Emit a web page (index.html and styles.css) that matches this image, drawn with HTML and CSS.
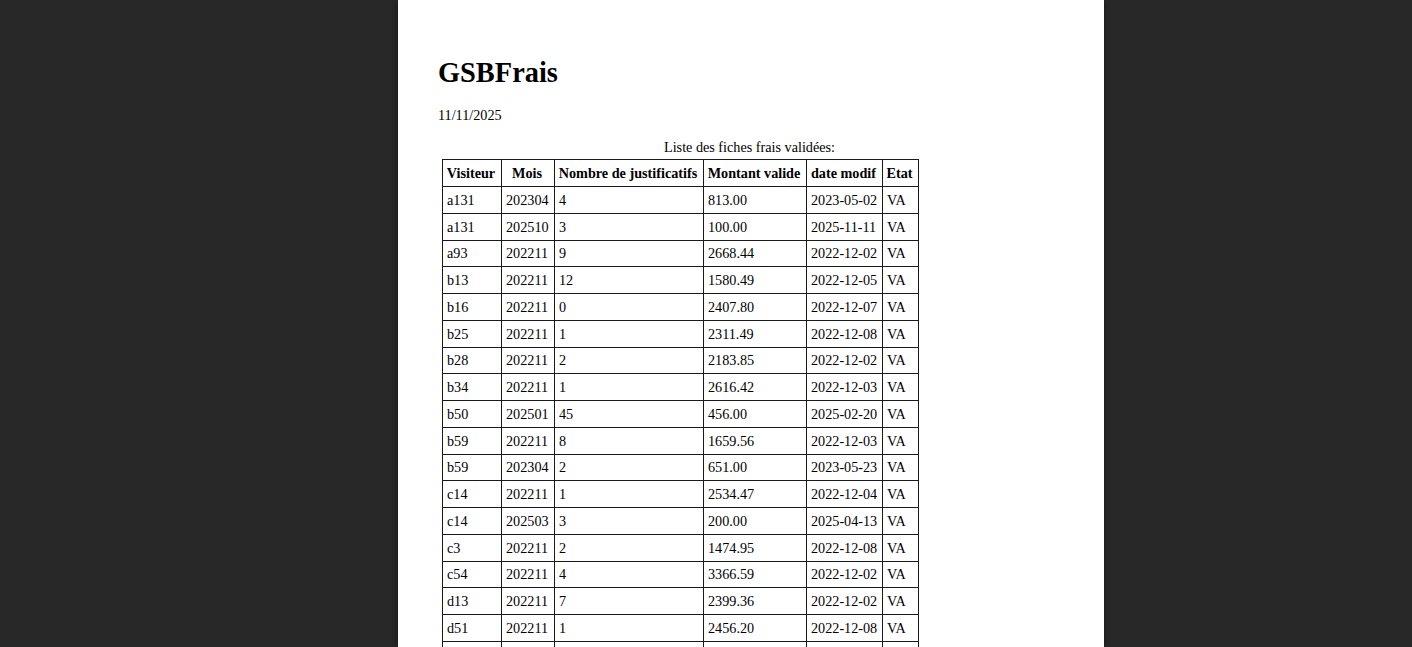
FILE: index.html
```html
<!DOCTYPE html>
<html lang="fr">
<head>
<meta charset="utf-8">
<title>GSBFrais</title>
<link rel="stylesheet" href="styles.css">
</head>
<body>
<div class="viewer">
  <div class="page">
    <h1 class="title">GSBFrais</h1>
    <p class="date">11/11/2025</p>
    <div class="caption">Liste des fiches frais validées:</div>
    <table class="list">
      <colgroup>
        <col class="c1"><col class="c2"><col class="c3"><col class="c4"><col class="c5"><col class="c6">
      </colgroup>
      <thead>
        <tr><th>Visiteur</th><th>Mois</th><th>Nombre de justificatifs</th><th>Montant valide</th><th>date modif</th><th>Etat</th></tr>
      </thead>
      <tbody>
        <tr><td>a131</td><td>202304</td><td>4</td><td>813.00</td><td>2023-05-02</td><td>VA</td></tr>
        <tr><td>a131</td><td>202510</td><td>3</td><td>100.00</td><td>2025-11-11</td><td>VA</td></tr>
        <tr><td>a93</td><td>202211</td><td>9</td><td>2668.44</td><td>2022-12-02</td><td>VA</td></tr>
        <tr><td>b13</td><td>202211</td><td>12</td><td>1580.49</td><td>2022-12-05</td><td>VA</td></tr>
        <tr><td>b16</td><td>202211</td><td>0</td><td>2407.80</td><td>2022-12-07</td><td>VA</td></tr>
        <tr><td>b25</td><td>202211</td><td>1</td><td>2311.49</td><td>2022-12-08</td><td>VA</td></tr>
        <tr><td>b28</td><td>202211</td><td>2</td><td>2183.85</td><td>2022-12-02</td><td>VA</td></tr>
        <tr><td>b34</td><td>202211</td><td>1</td><td>2616.42</td><td>2022-12-03</td><td>VA</td></tr>
        <tr><td>b50</td><td>202501</td><td>45</td><td>456.00</td><td>2025-02-20</td><td>VA</td></tr>
        <tr><td>b59</td><td>202211</td><td>8</td><td>1659.56</td><td>2022-12-03</td><td>VA</td></tr>
        <tr><td>b59</td><td>202304</td><td>2</td><td>651.00</td><td>2023-05-23</td><td>VA</td></tr>
        <tr><td>c14</td><td>202211</td><td>1</td><td>2534.47</td><td>2022-12-04</td><td>VA</td></tr>
        <tr><td>c14</td><td>202503</td><td>3</td><td>200.00</td><td>2025-04-13</td><td>VA</td></tr>
        <tr><td>c3</td><td>202211</td><td>2</td><td>1474.95</td><td>2022-12-08</td><td>VA</td></tr>
        <tr><td>c54</td><td>202211</td><td>4</td><td>3366.59</td><td>2022-12-02</td><td>VA</td></tr>
        <tr><td>d13</td><td>202211</td><td>7</td><td>2399.36</td><td>2022-12-02</td><td>VA</td></tr>
        <tr><td>d51</td><td>202211</td><td>1</td><td>2456.20</td><td>2022-12-08</td><td>VA</td></tr>
        <tr><td>e22</td><td>202211</td><td>3</td><td>1820.10</td><td>2022-12-05</td><td>VA</td></tr>
      </tbody>
    </table>
  </div>
</div>
</body>
</html>
```
FILE: styles.css
```css
html, body {
  margin: 0;
  padding: 0;
  height: 100%;
  overflow: hidden;
  background: #282828;
}

.viewer {
  display: flex;
  padding-left: 398px;
  height: 100%;
}

.page {
  width: 706px;
  flex: none;
  background: #ffffff;
  box-shadow: 0 0 6px rgba(0, 0, 0, 0.45);
  padding: 40px 40px 0 40px;
  box-sizing: border-box;
  font-family: "Liberation Serif", "Times New Roman", serif;
  font-size: 14.2px;
  color: #000;
}

.title {
  margin: 17px 0 0 0;
  font-size: 28.4px;
  font-weight: bold;
  line-height: 1.15;
}

.date {
  margin: 17px 0 0 0;
  line-height: 1.15;
}

.caption {
  margin: 16px 0 0 0;
  padding-left: 226px;
  line-height: 1.15;
}

.list {
  margin: 4px 0 0 4px;
  border-collapse: collapse;
  table-layout: fixed;
  width: 476px;
}

.c1 { width: 59px; }
.c2 { width: 53px; }
.c3 { width: 149px; }
.c4 { width: 103px; }
.c5 { width: 76px; }
.c6 { width: 36px; }

.list tr {
  height: 26.75px;
}

.list th,
.list td {
  border: 1px solid #1a1a1a;
  padding: 0 4px 0 4px;
  line-height: 1.15;
  white-space: nowrap;
  vertical-align: middle;
}

.list th {
  font-weight: bold;
  text-align: center;
  padding: 0 4px 0 2px;
}

.list td {
  text-align: left;
}
```
